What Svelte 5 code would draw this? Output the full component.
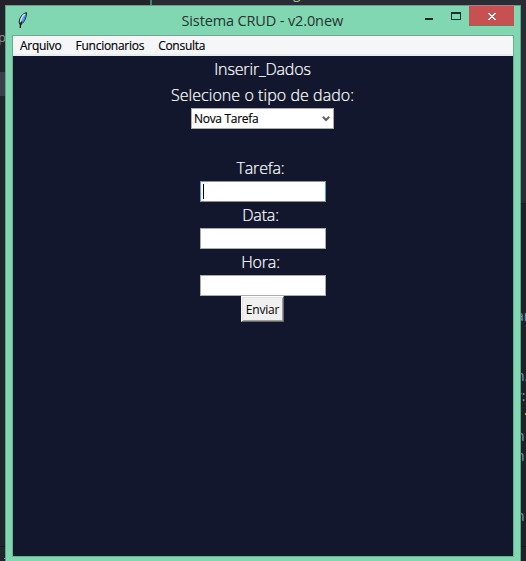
<script>
  const menus = ['Arquivo', 'Funcionarios', 'Consulta'];
  const fields = [
    { label: 'Tarefa:', focused: true },
    { label: 'Data:', focused: false },
    { label: 'Hora:', focused: false }
  ];
  const fragments = [
    { text: 'ar', y: 307 },
    { text: 'n.', y: 367 },
    { text: 'r:', y: 387 },
    { text: 'n', y: 427 },
    { text: 'n', y: 447 },
    { text: 'n', y: 507 }
  ];
</script>

<div class="desktop">
  <div class="strip left"><span class="p">p</span><i class="active"></i><i class="rule"></i><i class="dot"></i></div>
  <div class="strip top"><i class="tab"></i><i class="green"></i><span>g</span></div>
  <div class="strip right">
    {#each fragments as f}<span style="top: {f.y}px">{f.text}</span>{/each}
    <i class="lime"></i><i class="rule"></i>
  </div>

  <div class="window">
    <header>
      <svg class="feather" width="12" height="17" viewBox="0 0 12 17">
        <path d="M9.5 .7C6 1.2 2.2 5.5 2.2 10.5L3 12.7C6.7 11.3 9.4 6.5 9.5 .7Z" fill="#6ba7ef" stroke="#10151c" stroke-width="1" />
        <path d="M8 2C5.4 3.6 3.8 6.5 3.5 10" fill="none" stroke="#d9ecff" stroke-width="1.3" />
        <path d="M8.5 3.5C8 6.5 6.5 9.3 4.6 11" fill="none" stroke="#3b7dd0" stroke-width="1.2" />
        <path d="M4.6 9.5C3.8 11.5 3.3 13.5 3.2 16" fill="none" stroke="#0b0d12" stroke-width="1.3" />
      </svg>
      <h1>Sistema CRUD - v2.0new</h1>
      <div class="controls">
        <div class="min"><i></i></div>
        <div class="max"><i></i></div>
        <div class="close">
          <svg width="8" height="7" viewBox="0 0 8 7" shape-rendering="crispEdges" fill="#fff">
            <path d="M0 0h2v1h1v1h2V1h1V0h2v1H7v1H6v1H5v1h1v1h1v1h1v1H6V6H5V5H3v1H2v1H0V6h1V5h1V4h1V3H2V2H1V1H0z" />
          </svg>
        </div>
      </div>
    </header>
    <div class="client">
      <nav>{#each menus as m}<span>{m}</span>{/each}</nav>
      <main>
        <div class="label title"><span>Inserir_Dados</span></div>
        <div class="label prompt"><span>Selecione o tipo de dado:</span></div>
        <div class="combo">
          <span>Nova Tarefa</span>
          <svg width="8" height="6" viewBox="0 0 8 6"><path d="M.8 .8L4 4L7.2 .8" fill="none" stroke="#606060" stroke-width="2" /></svg>
        </div>
        <form>
          {#each fields as f}
            <div class="label field"><span>{f.label}</span></div>
            <div class="entry" class:focused={f.focused}></div>
          {/each}
        </form>
        <div class="button"><span>Enviar</span></div>
      </main>
    </div>
  </div>
</div>

<style>
  :global(body) { margin: 0; overflow: hidden; }
  .desktop {
    position: relative; width: 526px; height: 561px; overflow: hidden; box-sizing: border-box;
    padding: 5px 5px 0; background: #21252b; font-family: "Open Sans", "Noto Sans", sans-serif;
  }
  .strip { position: absolute; overflow: hidden; font: 14px/18px "Open Sans", sans-serif; }
  .strip span, .strip i { position: absolute; }
  .left { left: 0; top: 0; width: 5px; height: 561px; }
  .left .p { left: -2px; top: 28px; color: #8e969f; font-size: 13px; }
  .left .active { top: 72px; width: 5px; height: 24px; background: #3a3f4b; }
  .left .rule { top: 546px; width: 5px; height: 1px; background: #15181c; }
  .left .dot { left: 4px; top: 558px; width: 1px; height: 1px; background: #56a6c5; }
  .top { left: 0; top: 0; width: 526px; height: 5px; }
  .top .tab { left: 150px; width: 376px; height: 5px; background: #282c34; }
  .top .green { left: 150px; width: 2px; height: 5px; background: #378c6c; }
  .top span { left: 293px; top: -16px; color: #98c379; }
  .right { left: 521px; top: 0; width: 5px; height: 561px; background: linear-gradient(#282c34 203px, #171a1f 203px 204px, #1e2227 204px); }
  .right span { left: -5px; color: #7b9dbb; }
  .right .lime { left: 4px; top: 413px; width: 1px; height: 2px; background: #a4b51e; }
  .right .rule { top: 546px; width: 5px; height: 1px; background: #15181c; }
  .window {
    position: relative; box-sizing: border-box; width: 516px; height: 570px;
    background: #82d7b3; border: 1px solid #5fa486; padding: 0 6px;
  }
  header { display: flex; height: 29px; align-items: flex-start; }
  .feather { margin: 6px 0 0 5px; flex: none; }
  h1 {
    flex: 1; margin: 0 0 0 152.5px; font-size: 14.5px; line-height: 29px; font-weight: 400;
    letter-spacing: -0.13px; color: #27332f; white-space: nowrap;
  }
  .controls { display: flex; height: 20px; flex: none; }
  .min { width: 26px; }
  .min i { display: block; width: 8px; height: 2px; margin: 12px 0 0 3px; background: #262b29; }
  .max { width: 21px; }
  .max i { display: block; box-sizing: border-box; width: 10px; height: 8px; margin: 6px 0 0 3px; border: 1px solid #262b29; border-top-width: 2px; }
  .close { width: 45px; background: #c75050; display: flex; align-items: center; justify-content: center; }
  .close svg { margin: 1px 0 0 1px; }
  .client { width: 500px; height: 520px; border: 1px solid #69ae91; background: #12172e; }
  nav {
    display: flex; box-sizing: border-box; height: 20px; padding-left: 7px; gap: 14px;
    background: #f5f6f7; border-bottom: 2px solid #ebecec; font-size: 12px; line-height: 20px;
    color: #000; letter-spacing: -0.27px;
  }
  nav span { white-space: nowrap; -webkit-text-stroke: 0.15px #000; }
  main { display: flex; flex-direction: column; align-items: center; }
  .label {
    display: flex; justify-content: center; height: 26px; line-height: 26px;
    font-size: 16px; font-weight: 300; color: #fff; white-space: nowrap; -webkit-text-stroke: 0.2px #fff;
  }
  .title { padding-right: 1px; letter-spacing: -0.15px; }
  .prompt { padding-right: 1px; letter-spacing: 0.06px; }
  .field { padding-right: 5px; letter-spacing: -0.15px; }
  .combo {
    display: flex; box-sizing: border-box; width: 143px; height: 21px; align-items: center; margin-right: 1px;
    justify-content: space-between; padding: 0 3px 0 2px; background: #fff; border: 1px solid #acacac;
    font-size: 12px; color: #000; letter-spacing: -0.3px; -webkit-text-stroke: 0.15px #000;
  }
  form { display: flex; flex-direction: column; align-items: center; margin-top: 26px; }
  .entry { box-sizing: border-box; width: 126px; height: 21px; background: #fff; border: 1px solid #ababab; }
  .focused { border-color: #569de5; padding: 2px; }
  .focused::before { content: ""; display: block; width: 1px; height: 15px; background: #000; }
  .button {
    display: flex; box-sizing: border-box; width: 43px; height: 26px; align-items: center; justify-content: center; margin-right: 1px;
    background: #f0f0f0; border: 1px solid; border-color: #fff #696969 #696969 #fff;
    box-shadow: inset 1px 1px #e3e3e3, inset -1px -1px #a0a0a0; font-size: 12px; color: #000; letter-spacing: -0.2px;
  }
</style>
